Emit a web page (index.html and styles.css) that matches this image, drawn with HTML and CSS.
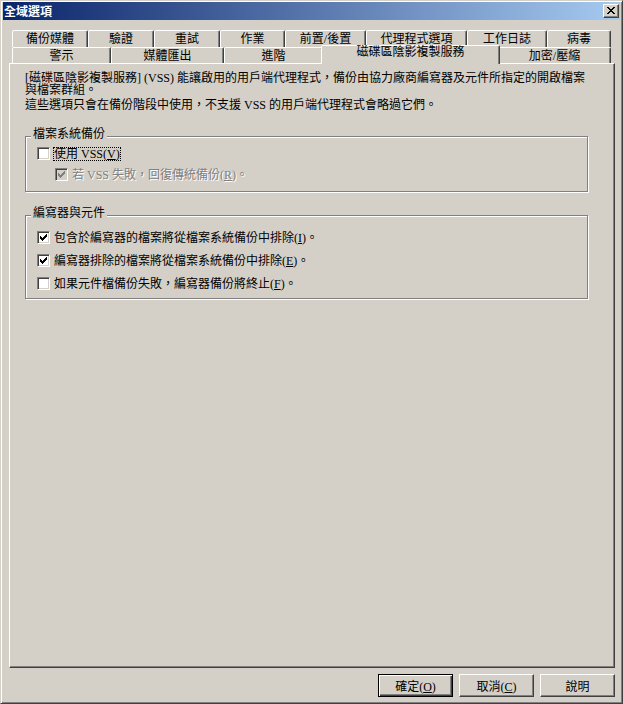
FILE: index.html
```html
<!DOCTYPE html>
<html lang="zh-Hant">
<head>
    <meta charset="UTF-8">
    <title>全域選項</title>
    <link rel="stylesheet" href="styles.css">
</head>
<body>
    <!-- shared check mark -->
    <svg class="defs" width="0" height="0">
        <symbol id="check" viewBox="0 0 7 7">
            <path d="M0 2h1v3H0z M1 3h1v3H1z M2 4h1v3H2z M3 3h1v3H3z M4 2h1v3H4z M5 1h1v3H5z M6 0h1v3H6z"/>
        </symbol>
    </svg>

    <div class="window">
        <div class="titlebar">
            <span class="title">全域選項</span>
            <button class="close-btn" aria-label="關閉">
                <svg width="8" height="7" viewBox="0 0 8 7">
                    <path d="M0 0h2v1H0z M6 0h2v1H6z M1 1h2v1H1z M5 1h2v1H5z M2 2h4v1H2z M3 3h2v1H3z M2 4h4v1H2z M1 5h2v1H1z M5 5h2v1H5z M0 6h2v1H0z M6 6h2v1H6z"/>
                </svg>
            </button>
        </div>

        <div class="dialog">
            <!-- Tabs -->
            <div class="tabs">
                <div class="tab-row back">
                    <div class="tab">備份媒體</div>
                    <div class="tab">驗證</div>
                    <div class="tab">重試</div>
                    <div class="tab">作業</div>
                    <div class="tab">前置/後置</div>
                    <div class="tab">代理程式選項</div>
                    <div class="tab">工作日誌</div>
                    <div class="tab">病毒</div>
                </div>
                <div class="tab-row front">
                    <div class="tab">警示</div>
                    <div class="tab">媒體匯出</div>
                    <div class="tab">進階</div>
                    <div class="tab active">磁碟區陰影複製服務</div>
                    <div class="tab">加密/壓縮</div>
                </div>
            </div>

            <!-- Tab page -->
            <div class="panel">
                <p class="intro">[磁碟區陰影複製服務] (VSS) 能讓啟用的用戶端代理程式，備份由協力廠商編寫器及元件所指定的開啟檔案<br>與檔案群組。</p>
                <p class="intro">這些選項只會在備份階段中使用，不支援 VSS 的用戶端代理程式會略過它們。</p>

                <fieldset class="group fs-group">
                    <legend>檔案系統備份</legend>
                    <label class="check-row">
                        <span class="checkbox"></span>
                        <span class="check-text focus">使用 VSS(<u>V</u>)</span>
                    </label>
                    <label class="check-row sub disabled">
                        <span class="checkbox"><svg class="mark"><use href="#check"/></svg></span>
                        <span class="check-text">若 VSS 失敗，回復傳統備份(<u>R</u>)。</span>
                    </label>
                </fieldset>

                <fieldset class="group writer-group">
                    <legend>編寫器與元件</legend>
                    <label class="check-row">
                        <span class="checkbox"><svg class="mark"><use href="#check"/></svg></span>
                        <span class="check-text">包含於編寫器的檔案將從檔案系統備份中排除(<u>I</u>)。</span>
                    </label>
                    <label class="check-row">
                        <span class="checkbox"><svg class="mark"><use href="#check"/></svg></span>
                        <span class="check-text">編寫器排除的檔案將從檔案系統備份中排除(<u>E</u>)。</span>
                    </label>
                    <label class="check-row">
                        <span class="checkbox"></span>
                        <span class="check-text">如果元件檔備份失敗，編寫器備份將終止(<u>F</u>)。</span>
                    </label>
                </fieldset>
            </div>

            <!-- Dialog buttons -->
            <div class="buttons">
                <button class="btn default">確定(<u>O</u>)</button>
                <button class="btn">取消(<u>C</u>)</button>
                <button class="btn">說明</button>
            </div>
        </div>
    </div>
</body>
</html>
```

FILE: styles.css
```css
/* General */
* {
    box-sizing: border-box;
}

body {
    margin: 0;
    background-color: #d4d0c8;
    font-family: "Liberation Serif", "Noto Sans CJK TC", serif;
    font-size: 12px;
    color: #000;
}

.defs {
    position: absolute;
}

/* Window frame */
.window {
    width: 623px;
    height: 704px;
    background-color: #d4d0c8;
    border: 1px solid;
    border-color: #d4d0c8 #404040 #404040 #d4d0c8;
    box-shadow: inset 1px 1px #fff, inset -1px -1px #808080;
    padding: 1px 2px 2px 2px;
}

.titlebar {
    height: 18px;
    display: flex;
    align-items: center;
    padding-left: 1px;
    background: linear-gradient(to right, #0a246a, #a6caf0);
}

.title {
    color: #fff;
    font-weight: bold;
    font-family: "Noto Sans CJK TC", sans-serif;
    line-height: 14px;
}

.close-btn {
    margin-left: auto;
    margin-right: 1px;
    width: 16px;
    height: 14px;
    padding: 0;
    display: flex;
    align-items: flex-start;
    justify-content: flex-start;
    background-color: #d4d0c8;
    border: 1px solid;
    border-color: #fff #404040 #404040 #fff;
    box-shadow: inset -1px -1px #808080;
}

.close-btn svg {
    display: block;
    margin: 2px 0 0 3px;
    fill: #000;
}

/* Dialog body */
.dialog {
    padding: 10px 0 0 6px;
}

/* Tabs */
.tabs {
    margin-left: 3px;
    width: 599px;
}

.tab-row {
    display: flex;
}

.tab {
    height: 16px;
    padding-top: 2px;
    line-height: 12px;
    text-align: center;
    white-space: nowrap;
    background-color: #d4d0c8;
    border: 1px solid;
    border-bottom: 0;
    border-color: #fff #404040 transparent #fff;
    border-radius: 2px 2px 0 0;
    box-shadow: inset -1px 0 #808080;
}

.back .tab {
    height: 17px;
}

.back .tab:nth-child(1) { width: 76px; }
.back .tab:nth-child(2) { width: 66px; }
.back .tab:nth-child(3) { width: 66px; }
.back .tab:nth-child(4) { width: 65px; }
.back .tab:nth-child(5) { width: 81px; }
.back .tab:nth-child(6) { width: 101px; }
.back .tab:nth-child(7) { width: 80px; }
.back .tab:nth-child(8) { width: 64px; }

.front .tab:nth-child(1) { width: 99px; }
.front .tab:nth-child(2) { width: 113px; }
.front .tab:nth-child(3) { width: 99px; }
.front .tab:nth-child(4) { width: 179px; }
.front .tab:nth-child(5) { width: 113px; }

.tab.active {
    position: relative;
    z-index: 1;
    height: 19px;
    margin: -2px -2px -1px -2px;
    padding-top: 0;
}

/* Tab page */
.panel {
    width: 606px;
    height: 605px;
    padding: 8px 15px 0 15px;
    border: 1px solid;
    border-color: #fff #404040 #404040 #fff;
    box-shadow: inset -1px -1px #808080;
}

.intro {
    margin: 0;
    line-height: 12px;
    white-space: nowrap;
}

.intro + .intro {
    margin-top: 3px;
}

/* Group boxes */
.group {
    width: 563px;
    min-width: 0;
    margin: 0;
    padding: 0 0 10px 5px;
    border: 1px solid #808080;
    box-shadow: inset 1px 1px #fff, 1px 1px #fff;
}

.group legend {
    padding: 0 2px 5px 2px;
    line-height: 12px;
    background-color: #d4d0c8;
}

.fs-group {
    margin-top: 17px;
}

.writer-group {
    margin-top: 15px;
    padding-bottom: 8px;
}

.check-row {
    display: flex;
    align-items: center;
    height: 13px;
    margin-left: 6px;
    margin-top: 10px;
}

.fs-group .check-row:first-of-type {
    margin-top: 2px;
}

.fs-group .check-row.sub {
    margin-top: 8px;
    margin-left: 24px;
}

.writer-group .check-row:first-of-type {
    margin-top: 7px;
}

.checkbox {
    flex: none;
    width: 13px;
    height: 13px;
    padding: 2px;
    background-color: #fff;
    border: 1px solid;
    border-color: #808080 #fff #fff #808080;
    box-shadow: inset 1px 1px #404040, inset -1px -1px #d4d0c8;
    color: #000;
}

.checkbox .mark {
    display: block;
    width: 7px;
    height: 7px;
    fill: currentColor;
}

.check-text {
    margin-left: 4px;
    line-height: 12px;
    white-space: nowrap;
}

.check-text.focus {
    margin-left: 3px;
    border: 1px dotted #000;
}

.disabled .checkbox {
    background-color: #d4d0c8;
    color: #808080;
}

.disabled .check-text {
    color: #808080;
    text-shadow: 1px 1px 0 #fff;
}

/* Buttons */
.buttons {
    display: flex;
    justify-content: flex-end;
    gap: 6px;
    width: 606px;
    margin-top: 6px;
}

.btn {
    width: 75px;
    height: 23px;
    padding: 0;
    font: inherit;
    color: #000;
    background-color: #d4d0c8;
    border: 1px solid;
    border-color: #fff #404040 #404040 #fff;
    box-shadow: inset -1px -1px #808080;
}

.btn.default {
    border-color: #000;
    box-shadow: inset 1px 1px #fff, inset -1px -1px #404040, inset -2px -2px #808080;
}
```
